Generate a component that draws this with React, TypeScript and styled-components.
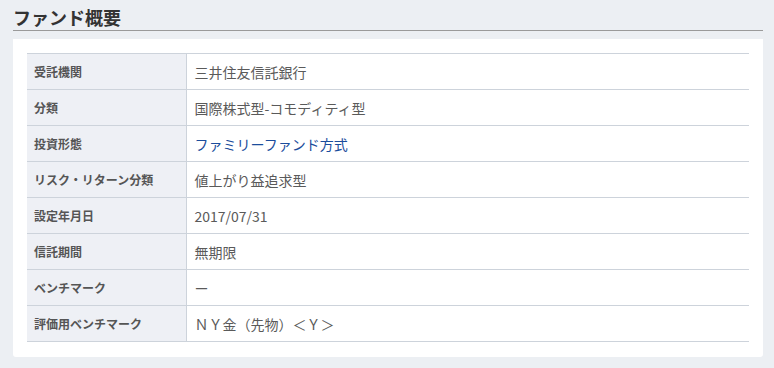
import styled, { createGlobalStyle } from "styled-components";

const GlobalStyle = createGlobalStyle`
  body {
    margin: 0;
    background: #eceff3;
    font-family: "Noto Sans CJK JP", "Noto Sans", sans-serif;
  }
`;

const Page = styled.div`
  padding: 0 11px 12px 13px;
`;

const Heading = styled.h2`
  margin: 0;
  padding-top: 4px;
  font-size: 18px;
  line-height: 26px;
  font-weight: 700;
  color: #333;
  border-bottom: 1px solid #9a9a9a;
`;

const Card = styled.div`
  margin-top: 8px;
  background: #fff;
  border-radius: 0 0 3px 3px;
  padding: 14px 14px 15px;
`;

const Table = styled.table`
  width: 100%;
  border-collapse: collapse;
  border-top: 1px solid #cdd3db;
`;

const Row = styled.tr`
  height: 36px;
  border-bottom: 1px solid #cdd3db;
`;

const Label = styled.th`
  width: 159px;
  box-sizing: border-box;
  padding: 0 7px;
  text-align: left;
  background: #eef0f5;
  border-right: 1px solid #cdd3db;
  font-size: 12px;
  font-weight: 700;
  color: #555;
`;

const Value = styled.td<{ $link?: boolean }>`
  padding: 0 8px;
  font-size: 14px;
  color: ${(p) => (p.$link ? "#1b4d9c" : "#5a5a5a")};
`;

interface FundRow {
  label: string;
  value: string;
  link?: boolean;
}

const rows: FundRow[] = [
  { label: "受託機関", value: "三井住友信託銀行" },
  { label: "分類", value: "国際株式型-コモディティ型" },
  { label: "投資形態", value: "ファミリーファンド方式", link: true },
  { label: "リスク・リターン分類", value: "値上がり益追求型" },
  { label: "設定年月日", value: "2017/07/31" },
  { label: "信託期間", value: "無期限" },
  { label: "ベンチマーク", value: "ー" },
  { label: "評価用ベンチマーク", value: "ＮＹ金（先物）＜Ｙ＞" },
];

export default function App() {
  return (
    <Page>
      <GlobalStyle />
      <Heading>ファンド概要</Heading>
      <Card>
        <Table>
          <tbody>
            {rows.map((r) => (
              <Row key={r.label}>
                <Label>{r.label}</Label>
                <Value $link={r.link}>{r.value}</Value>
              </Row>
            ))}
          </tbody>
        </Table>
      </Card>
    </Page>
  );
}
